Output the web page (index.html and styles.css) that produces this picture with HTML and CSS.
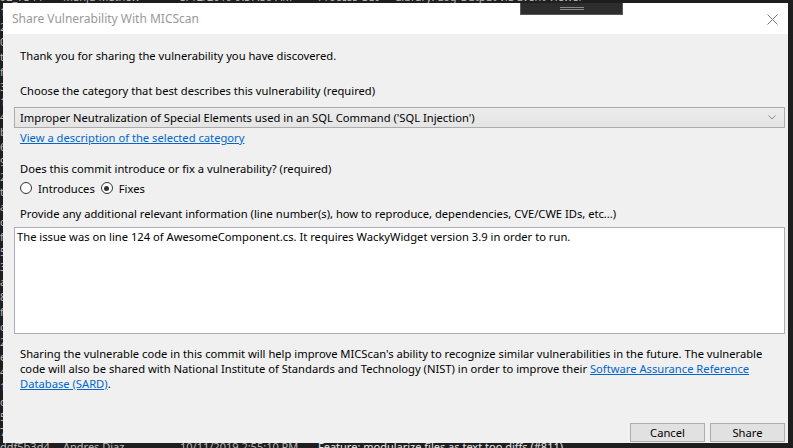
FILE: index.html
```html
<!DOCTYPE html>
<html>
<head>
<meta charset="utf-8">
<link rel="stylesheet" href="styles.css">
</head>
<body>
<div class="desktop">
  <div class="bg-rows">
    <div class="bg-row"><span>92_7344</span><span>Manju Mathew</span><span>3/12/2019 9:37:59 AM</span><span>Process OSI — Library: Log Output via Event Viewer</span></div>
    <div class="bg-row"><span>1</span></div>
    <div class="bg-row"><span>2</span></div>
    <div class="bg-row"><span>0</span></div>
    <div class="bg-row"><span>t</span></div>
    <div class="bg-row"><span>f</span></div>
    <div class="bg-row"><span>3</span></div>
    <div class="bg-row"><span>1</span></div>
    <div class="bg-row"><span>4</span></div>
    <div class="bg-row"><span>b</span></div>
    <div class="bg-row"><span>6</span></div>
    <div class="bg-row"><span>9</span></div>
    <div class="bg-row"><span>2</span></div>
    <div class="bg-row"><span>t</span></div>
    <div class="bg-row"><span>a</span></div>
    <div class="bg-row"><span>c</span></div>
    <div class="bg-row"><span>f</span></div>
    <div class="bg-row"><span>5</span></div>
    <div class="bg-row"><span>3</span></div>
    <div class="bg-row"><span>a</span></div>
    <div class="bg-row"><span>8</span></div>
    <div class="bg-row"><span>f</span></div>
    <div class="bg-row"><span>c</span></div>
    <div class="bg-row"><span>2</span></div>
    <div class="bg-row"><span>e</span></div>
    <div class="bg-row"><span>4</span></div>
    <div class="bg-row"><span>1</span></div>
    <div class="bg-row"><span>d</span></div>
    <div class="bg-row"><span>5</span></div>
    <div class="bg-row"><span>7</span></div>
    <div class="bg-row"><span>ddf5b3d4</span><span>Andres Diaz</span><span>10/11/2019 2:55:10 PM</span><span class="hl">Feature: modularize files as text too diffs (#811)</span></div>
  </div>

  <div class="dialog">
    <div class="titlebar">
      <span class="title">Share Vulnerability With MICScan</span>
      <svg class="close" width="11" height="11" viewBox="0 0 11 11"><path d="M0.5 0.5 L10.5 10.5 M10.5 0.5 L0.5 10.5" stroke="#7a7a7a" stroke-width="1" fill="none"/></svg>
    </div>
    <div class="content">
      <p class="label">Thank you for sharing the vulnerability you have discovered.</p>
      <p class="label gap-choose">Choose the category that best describes this vulnerability (required)</p>
      <div class="select">
        <span>Improper Neutralization of Special Elements used in an SQL Command ('SQL Injection')</span>
        <svg width="8" height="5" viewBox="0 0 8 5"><path d="M0.5 0.5 L4 4 L7.5 0.5" stroke="#8a8a8a" stroke-width="1" fill="none"/></svg>
      </div>
      <a class="link first-link" href="#">View a description of the selected category</a>
      <p class="label gap-does">Does this commit introduce or fix a vulnerability? (required)</p>
      <div class="radios">
        <span class="radio"></span><span class="radio-text">Introduces</span>
        <span class="radio checked"></span><span class="radio-text">Fixes</span>
      </div>
      <p class="label gap-provide">Provide any additional relevant information (line number(s), how to reproduce, dependencies, CVE/CWE IDs, etc...)</p>
      <div class="textarea">The issue was on line 124 of AwesomeComponent.cs. It requires WackyWidget version 3.9 in order to run.</div>
      <p class="label note">Sharing the vulnerable code in this commit will help improve MICScan's ability to recognize similar vulnerabilities in the future. The vulnerable<br>code will also be shared with National Institute of Standards and Technology (NIST) in order to improve their <a class="link" href="#">Software Assurance Reference<br>Database (SARD)</a>.</p>
      <div class="buttons">
        <button class="btn">Cancel</button>
        <button class="btn">Share</button>
      </div>
    </div>
  </div>

  <div class="grip"><span class="grip-lines"></span></div>
</div>
</body>
</html>
```

FILE: styles.css
```css
html, body {
  margin: 0;
  padding: 0;
}
body {
  width: 793px;
  height: 448px;
  overflow: hidden;
  background: #1e1e1e;
  font-family: "Segoe UI", "Noto Sans", sans-serif;
}
.desktop {
  position: relative;
  width: 793px;
  height: 448px;
  overflow: hidden;
}
.bg-rows {
  position: absolute;
  left: 0;
  top: -11px;
  color: #b9b9b9;
  font-size: 11px;
  line-height: 15px;
}
.bg-row {
  display: grid;
  grid-template-columns: 63px 117px 138px 1fr;
  white-space: nowrap;
  height: 15px;
}
.bg-row .hl {
  color: #e8e8e8;
}
.dialog {
  position: absolute;
  left: 3px;
  top: 3px;
  width: 785px;
  height: 440px;
  background: #f0f0f0;
  display: flex;
  flex-direction: column;
}
.titlebar {
  height: 31px;
  background: #ffffff;
  display: flex;
  align-items: center;
  justify-content: space-between;
  padding: 0 10px 0 9px;
  flex: none;
}
.title {
  color: #999999;
  font-size: 12px;
}
.close {
  display: block;
  margin-top: 1px;
}
.content {
  flex: 1;
  display: flex;
  flex-direction: column;
  padding: 14px 3px 1px 11px;
  min-height: 0;
}
.label {
  margin: 0 0 0 6px;
  font-size: 11.2px;
  line-height: 16px;
  color: #000;
  white-space: nowrap;
}
.gap-choose { margin-top: 19px; }
.select {
  margin-top: 8px;
  height: 19px;
  border: 1px solid #acacac;
  background: linear-gradient(#ececec, #e4e4e4);
  display: flex;
  align-items: center;
  justify-content: space-between;
  padding: 0 8px 0 5px;
  font-size: 11.2px;
  color: #000;
}
.select svg { display: block; }
.link {
  color: #0066cc;
  text-decoration: underline;
  font-size: 11.2px;
}
.first-link {
  margin: 2px 0 0 6px;
  line-height: 16px;
  align-self: flex-start;
}
.gap-does { margin-top: 15px; }
.radios {
  margin: 3px 0 0 6px;
  display: flex;
  align-items: center;
  height: 16px;
  font-size: 11.2px;
}
.radio {
  box-sizing: border-box;
  width: 12px;
  height: 12px;
  border: 1px solid #333;
  border-radius: 50%;
  background: #fff;
  position: relative;
}
.radio.checked::after {
  content: "";
  position: absolute;
  left: 2.5px;
  top: 2.5px;
  width: 5px;
  height: 5px;
  border-radius: 50%;
  background: #333;
}
.radio-text {
  margin: 0 6px 0 6px;
}
.gap-provide { margin-top: 10px; }
.textarea {
  margin-top: 5px;
  height: 103px;
  border: 1px solid #abadb3;
  background: #fff;
  font-size: 11.2px;
  line-height: 16px;
  padding: 1px 2px;
  color: #000;
}
.note {
  margin-top: 12px;
  line-height: 15px;
}
.buttons {
  margin-top: auto;
  display: flex;
  justify-content: flex-end;
  gap: 5px;
}
.btn {
  width: 75px;
  height: 19px;
  border: 1px solid #adadad;
  background: #e1e1e1;
  font-family: inherit;
  font-size: 11.2px;
  color: #000;
  padding: 0;
  line-height: 16px;
}
.grip {
  position: absolute;
  left: 520px;
  top: 3px;
  width: 103px;
  height: 12px;
  box-sizing: border-box;
  background: #2d2d2d;
  border: 1px solid #5a5a5a;
  border-top: none;
  display: flex;
  align-items: center;
  justify-content: center;
}
.grip-lines {
  width: 24px;
  height: 3px;
  border-top: 1px solid #8a8a8a;
  border-bottom: 1px solid #8a8a8a;
  box-sizing: border-box;
}
```
